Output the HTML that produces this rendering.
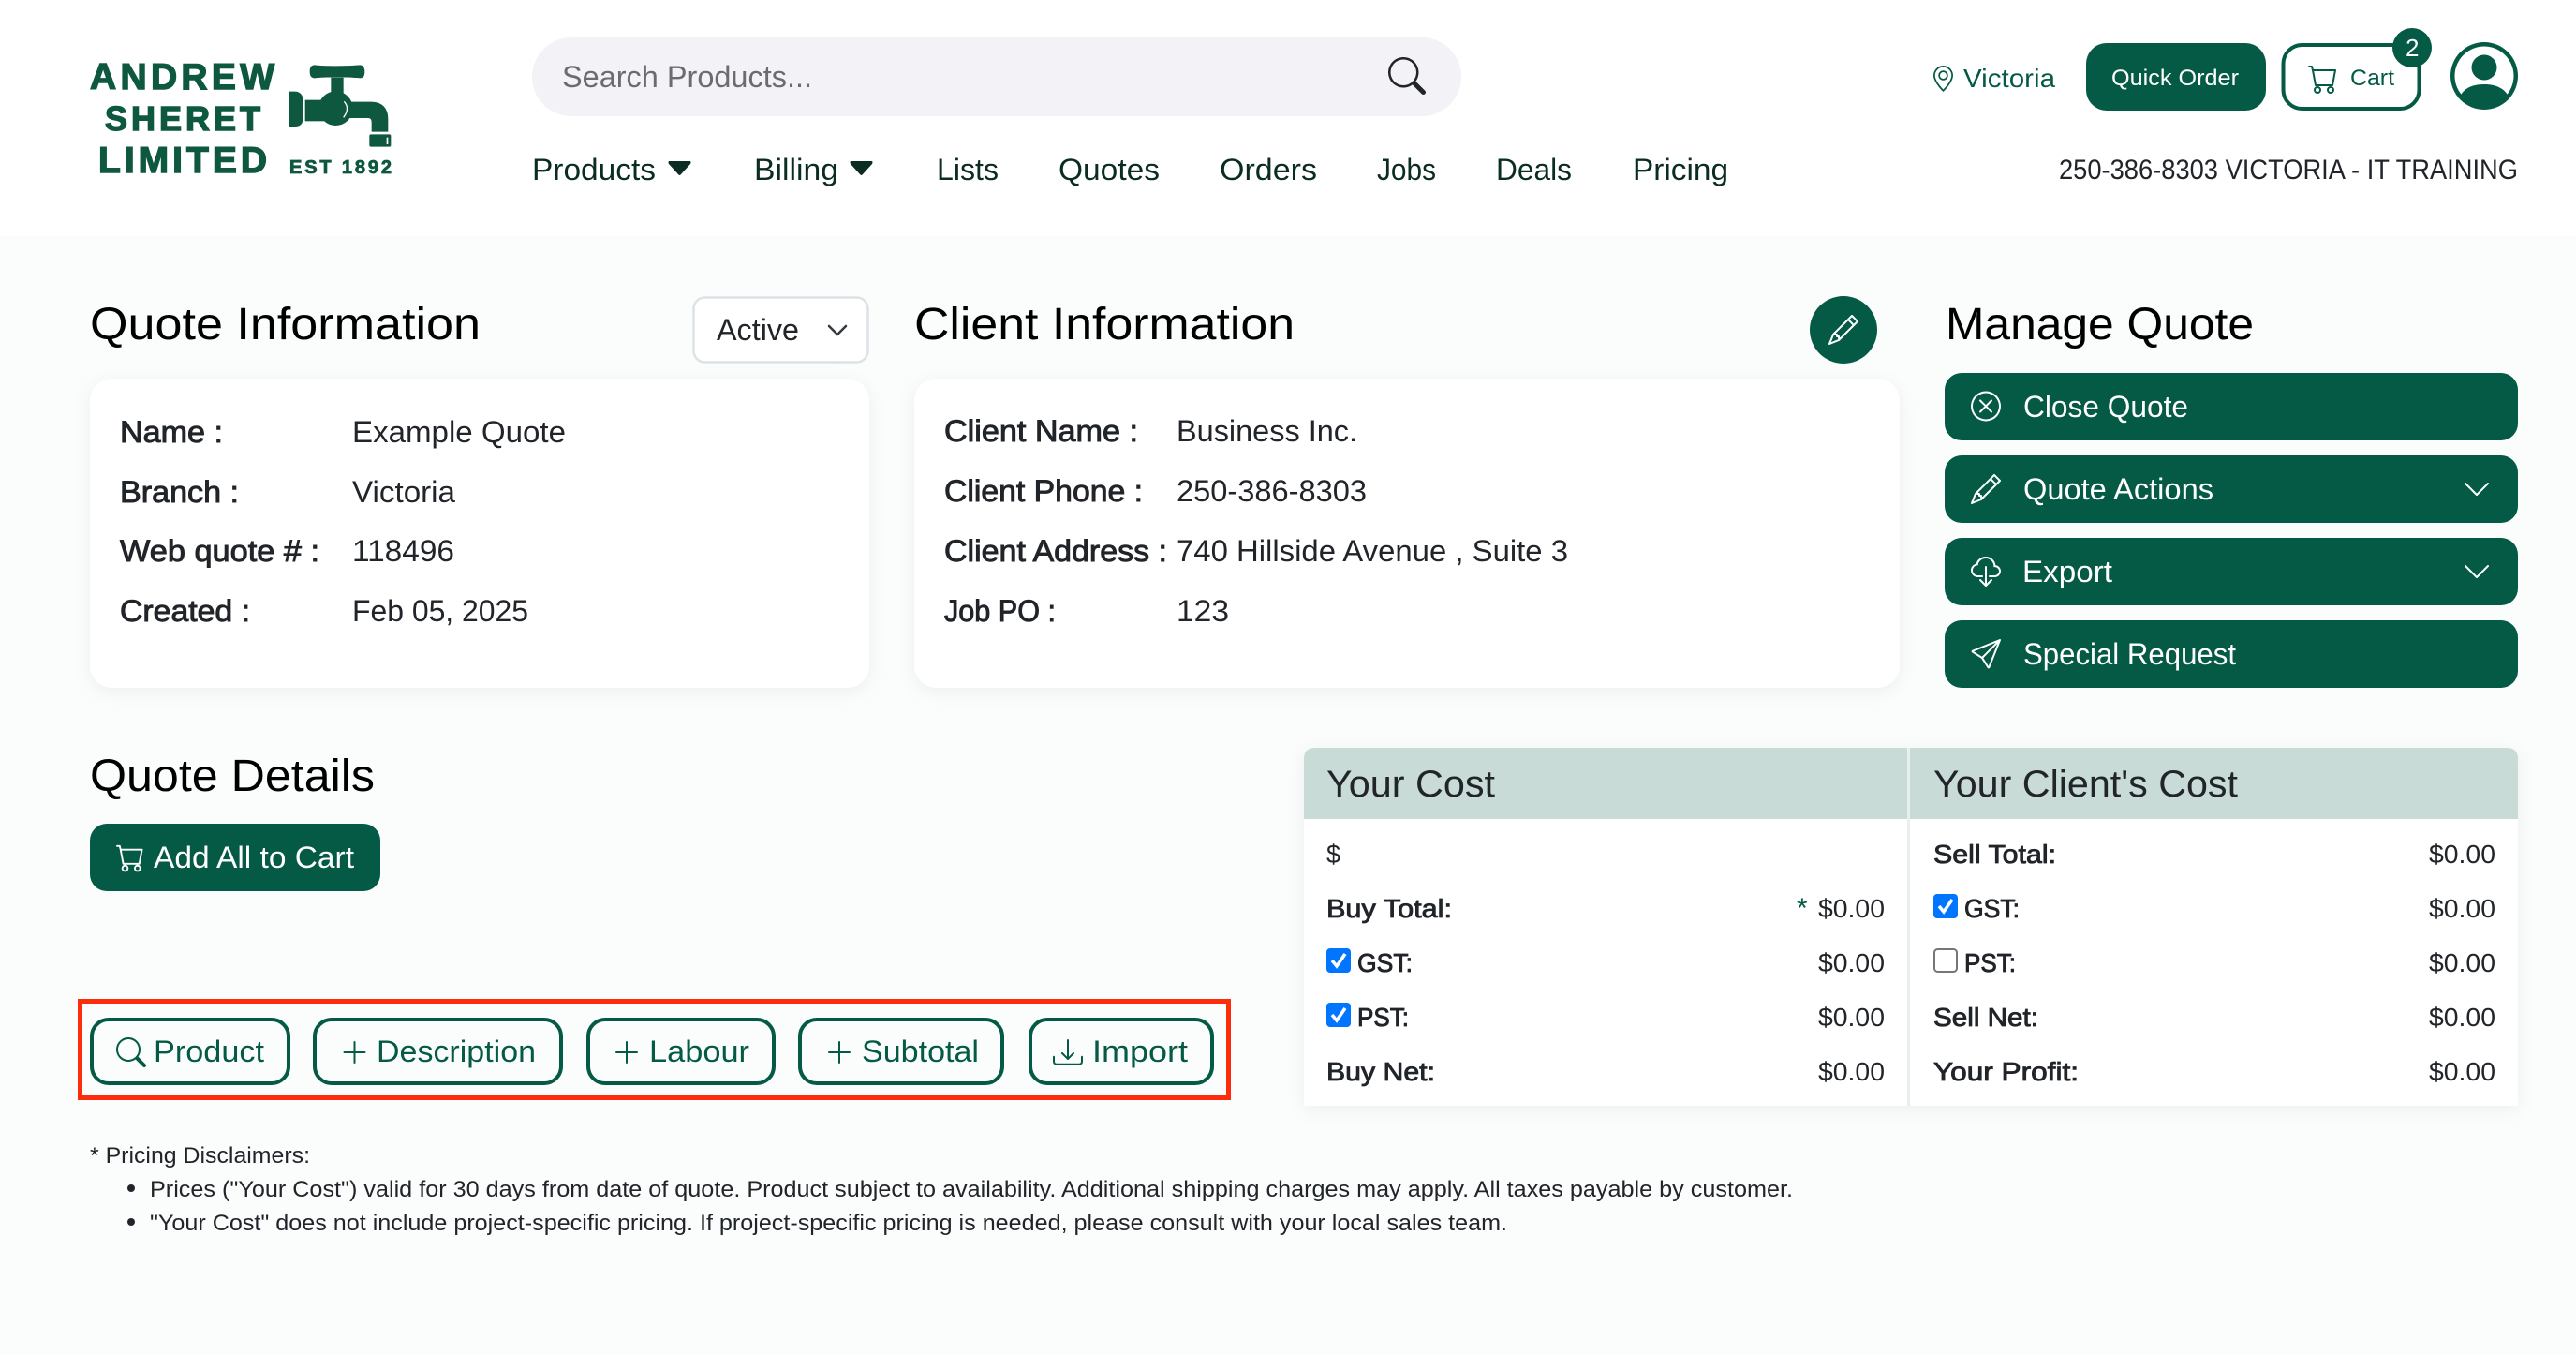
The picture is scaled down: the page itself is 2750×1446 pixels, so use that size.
<!DOCTYPE html>
<html lang="en"><head><meta charset="utf-8"><title>Quote</title>
<style>
html,body{margin:0;padding:0;background:#fbfdfd;width:2750px;height:1446px;overflow:hidden}
svg{display:block}
text{font-family:"Liberation Sans",Arial,sans-serif;font-size:32px;fill:#212529}
.b{stroke:#212529;stroke-width:.9px}
.h{font-size:48px;fill:#000}
.w{fill:#fff}
.g{fill:#045a44}
.n{fill:#0a2c22}
.t{font-size:28px}
.tb{font-size:28px;stroke:#212529;stroke-width:.85px}
.f{font-size:24px}
.logo{font-weight:700;fill:#0e5840;stroke:#0e5840;stroke-width:1.4px}
</style></head><body>
<svg width="2750" height="1446" viewBox="0 0 2750 1446" xmlns="http://www.w3.org/2000/svg">
<defs>
<filter id="s" x="-5%" y="-10%" width="110%" height="120%"><feDropShadow dx="0" dy="4" stdDeviation="9" flood-color="#000" flood-opacity=".055"/></filter>
<g id="pencil"><path d="M12.146.146a.5.5 0 0 1 .708 0l3 3a.5.5 0 0 1 0 .708l-10 10a.5.5 0 0 1-.168.11l-5 2a.5.5 0 0 1-.65-.65l2-5a.5.5 0 0 1 .11-.168l10-10zM11.207 2.5 13.5 4.793 14.793 3.5 12.5 1.207 11.207 2.5zm1.586 3L10.5 3.207 4 9.707V10h.5a.5.5 0 0 1 .5.5v.5h.5a.5.5 0 0 1 .5.5v.5h.293l6.5-6.5zm-9.761 5.175-.106.106-1.528 3.821 3.821-1.528.106-.106A.5.5 0 0 1 5 12.5V12h-.5a.5.5 0 0 1-.5-.5V11h-.5a.5.5 0 0 1-.468-.325z"/></g>
<g id="cart"><path d="M0 1.5A.5.5 0 0 1 .5 1H2a.5.5 0 0 1 .485.379L2.89 3H14.5a.5.5 0 0 1 .491.592l-1.5 8A.5.5 0 0 1 13 12H4a.5.5 0 0 1-.491-.408L2.01 3.607 1.61 2H.5a.5.5 0 0 1-.5-.5zM3.102 4l1.313 7h8.17l1.313-7H3.102zM5 12a2 2 0 1 0 0 4 2 2 0 0 0 0-4zm7 0a2 2 0 1 0 0 4 2 2 0 0 0 0-4zm-7 1a1 1 0 1 1 0 2 1 1 0 0 1 0-2zm7 0a1 1 0 1 1 0 2 1 1 0 0 1 0-2z"/></g>
<g id="search"><path d="M11.742 10.344a6.5 6.5 0 1 0-1.397 1.398h-.001c.03.04.062.078.098.115l3.85 3.85a1 1 0 0 0 1.415-1.414l-3.85-3.85a1.007 1.007 0 0 0-.115-.1zM12 6.5a5.5 5.5 0 1 1-11 0 5.5 5.5 0 0 1 11 0z"/></g>
<g id="chev"><path d="M1.646 4.646a.5.5 0 0 1 .708 0L8 10.293l5.646-5.647a.5.5 0 0 1 .708.708l-6 6a.5.5 0 0 1-.708 0l-6-6a.5.5 0 0 1 0-.708z"/></g>
<g id="plus"><path d="M8 2a.5.5 0 0 1 .5.5v5h5a.5.5 0 0 1 0 1h-5v5a.5.5 0 0 1-1 0v-5h-5a.5.5 0 0 1 0-1h5v-5A.5.5 0 0 1 8 2Z"/></g>
</defs>

<rect width="2750" height="1446" fill="#fbfdfd"/>
<rect width="2750" height="252" fill="#fff"/>

<!-- logo -->
<text class="logo" x="96" y="95" style="font-size:39px" textLength="197" lengthAdjust="spacing">ANDREW</text>
<text class="logo" x="112" y="139" style="font-size:36px" textLength="166" lengthAdjust="spacing">SHERET</text>
<text class="logo" x="105" y="184" style="font-size:39px" textLength="180" lengthAdjust="spacing">LIMITED</text>
<text class="logo" x="309" y="185" style="font-size:20px;stroke-width:.8px" textLength="109" lengthAdjust="spacing">EST 1892</text>
<g transform="translate(80 50) scale(.33333)" fill="#0e5840">
<path d="M768 58C795 62 880 62 912 58C925 58 928 70 928 79C928 92 925 100 912 100C880 96 795 96 768 100C755 100 752 90 752 79C752 68 755 58 768 58Z"/>
<rect x="820" y="98" width="40" height="60"/>
<path d="M685 143H705Q730 145 730 170V230Q730 255 705 255H685Z"/>
<rect x="737" y="170" width="70" height="68"/>
<circle cx="835" cy="197" r="55"/>
<path d="M865 176H950Q1003 178 1003 232V272H950V240Q950 228 938 228H865Z"/>
<path d="M862 175Q882 197 860 226" fill="none" stroke="#fff" stroke-width="4"/>
<rect x="943" y="280" width="69" height="40" rx="5"/>
<rect x="998" y="290" width="5" height="22" fill="#fff"/>
</g>

<!-- search -->
<rect x="568" y="40" width="992" height="84" rx="42" fill="#f2f2f7"/>
<text x="600" y="93" textLength="267" lengthAdjust="spacingAndGlyphs" style="fill:#6c6c70">Search Products...</text>
<use href="#search" transform="translate(1482 61) scale(2.5)" fill="#212529"/>

<!-- nav -->
<text class="n" x="568" y="192" textLength="132" lengthAdjust="spacingAndGlyphs">Products</text>
<path d="M714 172H737Q738 173 737 175L727 186Q725.500 188 724 186L714 175Q713 173 714 172Z" fill="#0a2c22"/>
<text class="n" x="805" y="192" textLength="90" lengthAdjust="spacingAndGlyphs">Billing</text>
<path d="M908 172H931Q932 173 931 175L921 186Q919.500 188 918 186L908 175Q907 173 908 172Z" fill="#0a2c22"/>
<text class="n" x="1000" y="192" textLength="66" lengthAdjust="spacingAndGlyphs">Lists</text>
<text class="n" x="1130" y="192" textLength="108" lengthAdjust="spacingAndGlyphs">Quotes</text>
<text class="n" x="1302" y="192" textLength="104" lengthAdjust="spacingAndGlyphs">Orders</text>
<text class="n" x="1470" y="192" textLength="63" lengthAdjust="spacingAndGlyphs">Jobs</text>
<text class="n" x="1597" y="192" textLength="81" lengthAdjust="spacingAndGlyphs">Deals</text>
<text class="n" x="1743" y="192" textLength="102" lengthAdjust="spacingAndGlyphs">Pricing</text>

<!-- top right -->
<g transform="translate(2060.500 70) scale(1.75)" fill="#045a44"><path d="M12.166 8.94c-.524 1.062-1.234 2.12-1.96 3.07A31.493 31.493 0 0 1 8 14.58a31.481 31.481 0 0 1-2.206-2.57c-.726-.95-1.436-2.008-1.96-3.07C3.304 7.867 3 6.862 3 6a5 5 0 0 1 10 0c0 .862-.305 1.867-.834 2.94zM8 16s6-5.686 6-10A6 6 0 0 0 2 6c0 4.314 6 10 6 10z"/><path d="M8 8a2 2 0 1 1 0-4 2 2 0 0 1 0 4zm0 1a3 3 0 1 0 0-6 3 3 0 0 0 0 6z"/></g>
<text class="g" x="2096" y="93" style="font-size:28px" textLength="98" lengthAdjust="spacingAndGlyphs">Victoria</text>
<rect x="2227" y="46" width="192" height="72" rx="22" fill="#045a44"/>
<text class="w" x="2254" y="91" style="font-size:24px" textLength="136" lengthAdjust="spacingAndGlyphs">Quick Order</text>
<rect x="2437.500" y="48" width="145" height="68" rx="20" fill="#fff" stroke="#045a44" stroke-width="4"/>
<use href="#cart" transform="translate(2464 68) scale(2)" fill="#045a44"/>
<text class="g" x="2509" y="91" style="font-size:24px" textLength="47" lengthAdjust="spacingAndGlyphs">Cart</text>
<circle cx="2575" cy="51" r="21" fill="#045a44"/>
<text class="w" x="2568" y="60" style="font-size:26px">2</text>
<g transform="translate(2616 45) scale(4.5)" fill="#045a44"><path d="M11 6a3 3 0 1 1-6 0 3 3 0 0 1 6 0z"/><path fill-rule="evenodd" d="M0 8a8 8 0 1 1 16 0A8 8 0 0 1 0 8zm8-7a7 7 0 0 0-5.468 11.37C3.242 11.226 4.805 10 8 10s4.757 1.225 5.468 2.37A7 7 0 0 0 8 1z"/></g>
<text x="2198" y="191" textLength="490" lengthAdjust="spacingAndGlyphs" style="font-size:30px">250-386-8303 VICTORIA - IT TRAINING</text>

<!-- Quote Information -->
<text class="h" x="96" y="362" textLength="417" lengthAdjust="spacingAndGlyphs">Quote Information</text>
<rect x="740.500" y="317.500" width="186" height="69" rx="12" fill="#fff" stroke="#dee2e6" stroke-width="2.500"/>
<text x="765" y="363" textLength="88" lengthAdjust="spacingAndGlyphs">Active</text>
<polyline points="885,348 894,357 903,348" fill="none" stroke="#343a40" stroke-width="2.500" stroke-linecap="round" stroke-linejoin="round"/>
<rect x="96" y="404" width="832" height="330" rx="24" fill="#fff" filter="url(#s)"/>
<text class="b" x="128" y="472" textLength="110" lengthAdjust="spacingAndGlyphs">Name :</text>
<text class="b" x="128" y="536" textLength="127" lengthAdjust="spacingAndGlyphs">Branch :</text>
<text class="b" x="128" y="599" textLength="213" lengthAdjust="spacingAndGlyphs">Web quote # :</text>
<text class="b" x="128" y="663" textLength="139" lengthAdjust="spacingAndGlyphs">Created :</text>
<text x="376" y="472" textLength="228" lengthAdjust="spacingAndGlyphs">Example Quote</text>
<text x="376" y="536" textLength="110" lengthAdjust="spacingAndGlyphs">Victoria</text>
<text x="376" y="599" textLength="109" lengthAdjust="spacingAndGlyphs">118496</text>
<text x="376" y="663" textLength="188" lengthAdjust="spacingAndGlyphs">Feb 05, 2025</text>

<!-- Client Information -->
<text class="h" x="976" y="362" textLength="406" lengthAdjust="spacingAndGlyphs">Client Information</text>
<circle cx="1968" cy="352" r="36" fill="#045a44"/>
<use href="#pencil" transform="translate(1952 336) scale(2)" fill="#fff"/>
<rect x="976" y="404" width="1052" height="330" rx="24" fill="#fff" filter="url(#s)"/>
<text class="b" x="1008" y="471" textLength="207" lengthAdjust="spacingAndGlyphs">Client Name :</text>
<text class="b" x="1008" y="535" textLength="212" lengthAdjust="spacingAndGlyphs">Client Phone :</text>
<text class="b" x="1008" y="599" textLength="238" lengthAdjust="spacingAndGlyphs">Client Address :</text>
<text class="b" x="1008" y="663" textLength="119" lengthAdjust="spacingAndGlyphs">Job PO :</text>
<text x="1256" y="471" textLength="193" lengthAdjust="spacingAndGlyphs">Business Inc.</text>
<text x="1256" y="535" textLength="203" lengthAdjust="spacingAndGlyphs">250-386-8303</text>
<text x="1256" y="599" textLength="418" lengthAdjust="spacingAndGlyphs">740 Hillside Avenue , Suite 3</text>
<text x="1256" y="663" textLength="56" lengthAdjust="spacingAndGlyphs">123</text>

<!-- Manage Quote -->
<text class="h" x="2077" y="362" textLength="329" lengthAdjust="spacingAndGlyphs">Manage Quote</text>
<rect x="2076" y="398" width="612" height="72" rx="18" fill="#045a44"/>
<rect x="2076" y="486" width="612" height="72" rx="18" fill="#045a44"/>
<rect x="2076" y="574" width="612" height="72" rx="18" fill="#045a44"/>
<rect x="2076" y="662" width="612" height="72" rx="18" fill="#045a44"/>
<text class="w" x="2160" y="445" textLength="176" lengthAdjust="spacingAndGlyphs">Close Quote</text>
<text class="w" x="2160" y="533" textLength="203" lengthAdjust="spacingAndGlyphs">Quote Actions</text>
<text class="w" x="2159" y="621" textLength="96" lengthAdjust="spacingAndGlyphs">Export</text>
<text class="w" x="2160" y="709" textLength="227" lengthAdjust="spacingAndGlyphs">Special Request</text>
<g transform="translate(2104 417.500) scale(2)" fill="#fff"><path d="M8 15A7 7 0 1 1 8 1a7 7 0 0 1 0 14zm0 1A8 8 0 1 0 8 0a8 8 0 0 0 0 16z"/><path d="M4.646 4.646a.5.5 0 0 1 .708 0L8 7.293l2.646-2.647a.5.5 0 0 1 .708.708L8.707 8l2.647 2.646a.5.5 0 0 1-.708.708L8 8.707l-2.646 2.647a.5.5 0 0 1-.708-.708L7.293 8 4.646 5.354a.5.5 0 0 1 0-.708z"/></g>
<use href="#pencil" transform="translate(2104 506) scale(2)" fill="#fff"/>
<g transform="translate(2104 594) scale(2)" fill="#fff"><path d="M4.406 1.342A5.53 5.53 0 0 1 8 0c2.69 0 4.923 2 5.166 4.579C14.758 4.804 16 6.137 16 7.773 16 9.569 14.502 11 12.687 11H10a.5.5 0 0 1 0-1h2.688C13.979 10 15 8.988 15 7.773c0-1.216-1.02-2.228-2.313-2.228h-.5v-.5C12.188 2.825 10.328 1 8 1a4.53 4.53 0 0 0-2.941 1.1c-.757.652-1.153 1.438-1.153 2.055v.448l-.445.049C2.064 4.805 1 5.952 1 7.318 1 8.785 2.23 10 3.781 10H6a.5.5 0 0 1 0 1H3.781C1.708 11 0 9.366 0 7.318c0-1.763 1.266-3.223 2.942-3.593.143-.863.698-1.723 1.464-2.383z"/><path d="M7.646 15.854a.5.5 0 0 0 .708 0l3-3a.5.5 0 0 0-.708-.708L8.500 14.293V5.500a.5.5 0 0 0-1 0v8.793l-2.146-2.147a.5.5 0 0 0-.708.708l3 3z"/></g>
<g transform="translate(2104 682) scale(2)" fill="#fff"><path d="M15.854.146a.5.5 0 0 1 .11.54l-5.819 14.547a.75.75 0 0 1-1.329.124l-3.178-4.995L.643 7.184a.75.75 0 0 1 .124-1.33L15.314.037a.5.5 0 0 1 .54.11ZM6.636 10.070l2.761 4.338L14.130 2.576 6.636 10.070Zm6.787-8.201L1.591 6.602l4.339 2.760 7.494-7.493Z"/></g>
<use href="#chev" transform="translate(2628 506) scale(2)" fill="#fff"/>
<use href="#chev" transform="translate(2628 594) scale(2)" fill="#fff"/>

<!-- Quote Details -->
<text class="h" x="96" y="844" textLength="304" lengthAdjust="spacingAndGlyphs">Quote Details</text>
<rect x="96" y="879" width="310" height="72" rx="18" fill="#045a44"/>
<use href="#cart" transform="translate(124 900) scale(1.9)" fill="#fff"/>
<text class="w" x="164" y="926" textLength="214" lengthAdjust="spacingAndGlyphs">Add All to Cart</text>

<!-- red box -->
<rect x="85.500" y="1068.500" width="1226" height="103" fill="none" stroke="#fe2c0a" stroke-width="5"/>
<g fill="none" stroke="#045a44" stroke-width="4">
<rect x="98" y="1088" width="210" height="68" rx="18"/>
<rect x="336" y="1088" width="263" height="68" rx="18"/>
<rect x="628" y="1088" width="198" height="68" rx="18"/>
<rect x="854" y="1088" width="216" height="68" rx="18"/>
<rect x="1100" y="1088" width="194" height="68" rx="18"/>
</g>
<use href="#search" transform="translate(124 1107) scale(2)" fill="#045a44"/>
<use href="#plus" transform="translate(362.500 1107) scale(2)" fill="#045a44"/>
<use href="#plus" transform="translate(653 1107) scale(2)" fill="#045a44"/>
<use href="#plus" transform="translate(880 1107) scale(2)" fill="#045a44"/>
<g transform="translate(1124 1107) scale(2)" fill="#045a44"><path d="M.5 9.900a.5.5 0 0 1 .5.5v2.500a1 1 0 0 0 1 1h12a1 1 0 0 0 1-1v-2.500a.5.5 0 0 1 1 0v2.500a2 2 0 0 1-2 2H2a2 2 0 0 1-2-2v-2.500a.5.5 0 0 1 .5-.5z"/><path d="M7.646 11.854a.5.5 0 0 0 .708 0l3-3a.5.5 0 0 0-.708-.708L8.500 10.293V1.500a.5.5 0 0 0-1 0v8.793L5.354 8.146a.5.5 0 1 0-.708.708l3 3z"/></g>
<text class="g" x="164" y="1133" textLength="118" lengthAdjust="spacingAndGlyphs">Product</text>
<text class="g" x="402" y="1133" textLength="170" lengthAdjust="spacingAndGlyphs">Description</text>
<text class="g" x="693" y="1133" textLength="107" lengthAdjust="spacingAndGlyphs">Labour</text>
<text class="g" x="920" y="1133" textLength="125" lengthAdjust="spacingAndGlyphs">Subtotal</text>
<text class="g" x="1166" y="1133" textLength="102" lengthAdjust="spacingAndGlyphs">Import</text>

<!-- cost table -->
<path d="M1404 798H2676Q2688 798 2688 810V1180H1392V810Q1392 798 1404 798Z" fill="#fff" filter="url(#s)"/>
<path d="M1404 798H2676Q2688 798 2688 810V874H1392V810Q1392 798 1404 798Z" fill="#c9dbd6"/>
<rect x="2036" y="798" width="3" height="382" fill="#e9eeee"/>
<text x="1416" y="850" style="font-size:40px" textLength="180" lengthAdjust="spacingAndGlyphs">Your Cost</text>
<text x="2064" y="850" style="font-size:40px" textLength="325" lengthAdjust="spacingAndGlyphs">Your Client's Cost</text>

<text class="t" x="1416" y="921" textLength="15" lengthAdjust="spacingAndGlyphs">$</text>
<text class="tb" x="1416" y="979" textLength="134" lengthAdjust="spacingAndGlyphs">Buy Total:</text>
<text class="tb" x="1449" y="1037" textLength="59" lengthAdjust="spacingAndGlyphs">GST:</text>
<text class="tb" x="1449" y="1095" textLength="55" lengthAdjust="spacingAndGlyphs">PST:</text>
<text class="tb" x="1416" y="1153" textLength="116" lengthAdjust="spacingAndGlyphs">Buy Net:</text>
<text class="t g" x="1918" y="979" style="font-size:30px">*</text>
<text class="t" x="1941" y="979" textLength="71" lengthAdjust="spacingAndGlyphs">$0.00</text>
<text class="t" x="1941" y="1037" textLength="71" lengthAdjust="spacingAndGlyphs">$0.00</text>
<text class="t" x="1941" y="1095" textLength="71" lengthAdjust="spacingAndGlyphs">$0.00</text>
<text class="t" x="1941" y="1153" textLength="71" lengthAdjust="spacingAndGlyphs">$0.00</text>

<text class="tb" x="2064" y="921" textLength="131" lengthAdjust="spacingAndGlyphs">Sell Total:</text>
<text class="tb" x="2097" y="979" textLength="59" lengthAdjust="spacingAndGlyphs">GST:</text>
<text class="tb" x="2097" y="1037" textLength="55" lengthAdjust="spacingAndGlyphs">PST:</text>
<text class="tb" x="2064" y="1095" textLength="112" lengthAdjust="spacingAndGlyphs">Sell Net:</text>
<text class="tb" x="2064" y="1153" textLength="155" lengthAdjust="spacingAndGlyphs">Your Profit:</text>
<text class="t" x="2593" y="921" textLength="71" lengthAdjust="spacingAndGlyphs">$0.00</text>
<text class="t" x="2593" y="979" textLength="71" lengthAdjust="spacingAndGlyphs">$0.00</text>
<text class="t" x="2593" y="1037" textLength="71" lengthAdjust="spacingAndGlyphs">$0.00</text>
<text class="t" x="2593" y="1095" textLength="71" lengthAdjust="spacingAndGlyphs">$0.00</text>
<text class="t" x="2593" y="1153" textLength="71" lengthAdjust="spacingAndGlyphs">$0.00</text>

<g fill="#0075ff">
<rect x="1416" y="1012" width="26" height="26" rx="4"/>
<rect x="1416" y="1070" width="26" height="26" rx="4"/>
<rect x="2064" y="954" width="26" height="26" rx="4"/>
</g>
<g fill="none" stroke="#fff" stroke-width="3.500">
<polyline points="1422,1025 1427,1031 1436,1018"/>
<polyline points="1422,1083 1427,1089 1436,1076"/>
<polyline points="2070,967 2075,973 2084,960"/>
</g>
<rect x="2065" y="1013" width="24" height="24" rx="3.500" fill="#fff" stroke="#767676" stroke-width="2"/>

<!-- disclaimers -->
<text class="f" x="96" y="1241" textLength="235" lengthAdjust="spacingAndGlyphs">* Pricing Disclaimers:</text>
<circle cx="140" cy="1268" r="4" fill="#212529"/>
<circle cx="140" cy="1304" r="4" fill="#212529"/>
<text class="f" x="160" y="1277" textLength="1754" lengthAdjust="spacingAndGlyphs">Prices ("Your Cost") valid for 30 days from date of quote. Product subject to availability. Additional shipping charges may apply. All taxes payable by customer.</text>
<text class="f" x="160" y="1313" textLength="1449" lengthAdjust="spacingAndGlyphs">"Your Cost" does not include project-specific pricing. If project-specific pricing is needed, please consult with your local sales team.</text>
</svg>
</body></html>
